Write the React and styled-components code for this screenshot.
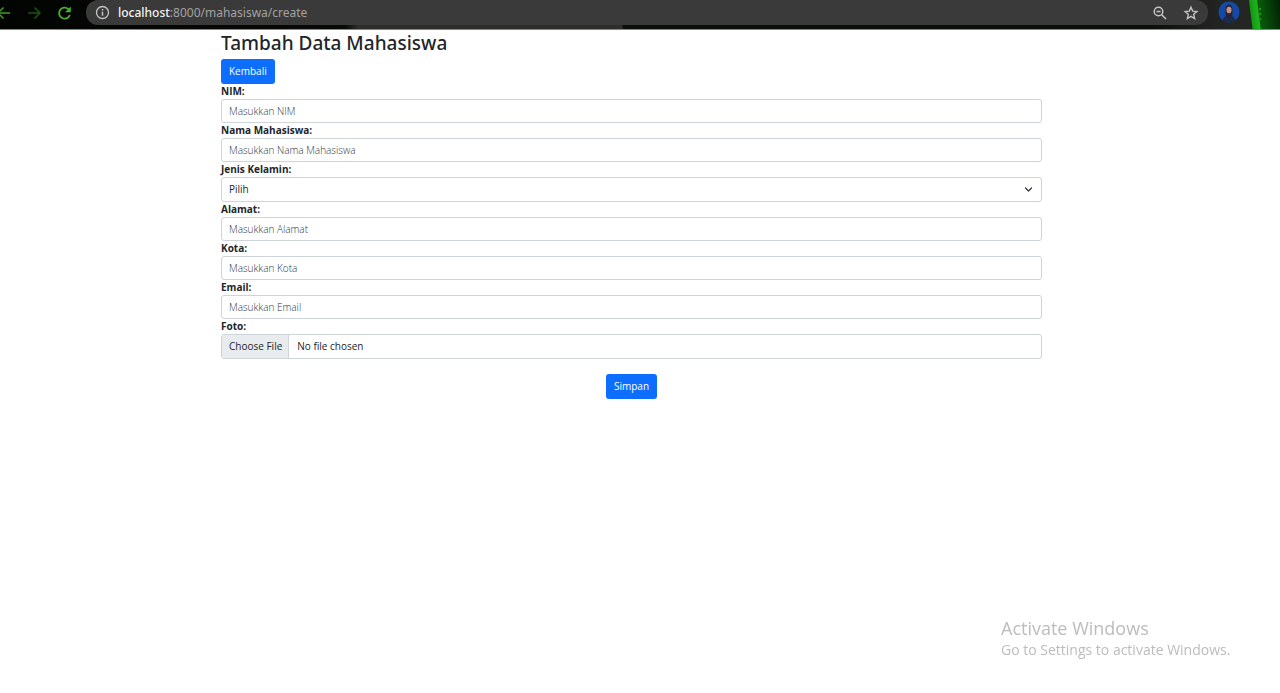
import React from "react";
import styled, { createGlobalStyle } from "styled-components";

const GlobalStyle = createGlobalStyle`
  *, *::before, *::after { box-sizing: border-box; }
  body {
    margin: 0;
    background: #fff;
    color: #212529;
    font-family: "Segoe UI", "Open Sans", "Noto Sans", sans-serif;
    font-size: 11px;
    line-height: 15px;
  }
`;

const BrowserBar = styled.header`
  display: flex;
  align-items: flex-start;
  height: 30px;
  overflow: hidden;
  border-bottom: 1px solid #85887f;
  background:
    linear-gradient(83deg, transparent 0 6px, #129b12 7px, #1fb51f 14px, #0a5a0c 15px, #074a09 22px, #053a07 28px, #021b03 40px) right / 34px 100% no-repeat,
    linear-gradient(90deg, #020402 0, #080a08 27%, #2e2f2c 28%, #2e2f2c 48.6%, #0c0e0b 48.7%, #0c0e0b 90%, #222421 95%, #262825 100%);
`;

const NavButtons = styled.nav`
  display: flex;
  flex: none;
  width: 86px;
  gap: 14px;
  margin-left: -4px;
  margin-right: 4px;
`;

const IconButton = styled.button`
  display: flex;
  flex: none;
  align-items: center;
  justify-content: center;
  width: 16px;
  height: 25px;
  padding: 0;
  border: 0;
  background: none;
  color: ${(p) => p.$color || "#c4c4c4"};
`;

const AddressBar = styled.div`
  display: flex;
  flex: 1;
  align-items: center;
  height: 25px;
  min-width: 0;
  padding: 0 9px 0 9px;
  gap: 15px;
  border-radius: 12px;
  background: #3a3a3a;
`;

const SiteInfo = styled.div`
  display: flex;
  flex: 1;
  align-items: center;
  gap: 8px;
  color: #c4c4c4;
`;

const Url = styled.span`
  color: #a2a2a2;
  font-family: "Segoe UI", "Noto Sans", sans-serif;
  font-size: 12px;
  line-height: 16px;
  white-space: nowrap;
`;

const Host = styled.span`
  color: #f2f2f2;
  font-weight: 500;
`;

const Profile = styled.div`
  display: flex;
  flex: none;
  width: 72px;
  padding: 1px 12px 0 10px;
  justify-content: space-between;
`;

const Page = styled.main`
  padding: 1px 17px 0 0;
`;

const Container = styled.div`
  max-width: 821px;
  margin: 0 auto;
`;

const Title = styled.h1`
  margin: 0 0 4px;
  font-family: "Segoe UI", "Noto Sans", sans-serif;
  font-size: 19px;
  font-weight: 500;
  line-height: 24px;
`;

const Button = styled.button`
  display: inline-block;
  height: 25px;
  padding: 0 8px;
  border: 0;
  border-radius: 3px;
  background: #0d6efd;
  color: #fff;
  font-family: inherit;
  font-size: 10px;
  line-height: 25px;
  text-decoration: none;
`;

const Field = styled.div`
  display: flex;
  flex-direction: column;
`;

const Label = styled.label`
  font-size: 10px;
  font-weight: 700;
  line-height: 15px;
`;

const controlStyle = `
  display: block;
  width: 100%;
  border: 1px solid #ced4da;
  border-radius: 3px;
  background: #fff;
  color: #212529;
  font-family: inherit;
  font-size: 10px;
  outline: none;
`;

const TextInput = styled.input`
  ${controlStyle}
  height: 24px;
  padding: 0 7px;
  &::placeholder { color: #30383f; font-weight: 300; opacity: 1; }
`;

const SelectWrap = styled.div`
  display: grid;
  align-items: center;
  > * { grid-area: 1 / 1; }
  > svg { justify-self: end; margin-right: 9px; pointer-events: none; }
`;

const Select = styled.select`
  ${controlStyle}
  height: 25px;
  padding: 0 24px 1px 7px;
  appearance: none;
`;

const FileInput = styled.input`
  ${controlStyle}
  height: 25px;
  line-height: 23px;
  &::file-selector-button {
    height: 23px;
    margin: 0 8px 0 0;
    padding: 0 6px 0 7px;
    border: 0;
    border-right: 1px solid #ced4da;
    background: #e9ecef;
    color: #212529;
    font: inherit;
  }
`;

const Actions = styled.div`
  display: flex;
  justify-content: center;
  margin-top: 15px;
`;

const Watermark = styled.aside`
  position: fixed;
  right: 54px;
  bottom: 33px;
  width: 225px;
  color: #bcbcbc;
  font-size: 14px;
  line-height: 20px;
  white-space: nowrap;
  pointer-events: none;
`;

const WatermarkTitle = styled.div`
  font-size: 18px;
  line-height: 24px;
`;

const stroke = { fill: "none", stroke: "currentColor", strokeWidth: 1.5 };

const ArrowIcon = ({ flip }) => (
  <svg width="16" height="16" viewBox="0 0 16 16" {...stroke}>
    <path d={flip ? "M2 8h12M8.5 2.5 14 8l-5.500 5.500" : "M14 8H2M7.500 2.500 2 8l5.500 5.500"} />
  </svg>
);

const ReloadIcon = () => (
  <svg width="16" height="16" viewBox="0 0 16 16" {...stroke} strokeWidth="1.8">
    <path d="M13.800 10A5.500 5.500 0 1 1 12.400 4.200L13 5" />
    <path d="M14.800 1.500v5.700H9z" fill="currentColor" stroke="none" />
  </svg>
);

const InfoIcon = () => (
  <svg width="15" height="15" viewBox="0 0 15 15" {...stroke} strokeWidth="1.300">
    <circle cx="7.500" cy="7.500" r="6" />
    <path d="M7.500 6.700v4.100M7.500 4v1.400" strokeWidth="1.500" />
  </svg>
);

const ZoomOutIcon = () => (
  <svg width="16" height="16" viewBox="0 0 16 16" {...stroke}>
    <circle cx="6.500" cy="6.500" r="4.300" />
    <path d="m9.700 9.700 4.300 4.300M4.500 6.500h4" />
  </svg>
);

const StarIcon = () => (
  <svg width="16" height="16" viewBox="0 0 16 16" {...stroke} strokeWidth="1.400">
    <path d="m8 2.200 1.700 3.900 4.200.4-3.200 2.800.9 4.200L8 11.300l-3.600 2.200.9-4.200-3.200-2.800 4.200-.4z" />
  </svg>
);

const Avatar = () => (
  <svg width="22" height="22" viewBox="0 0 22 22" role="img" aria-label="Profile">
    <defs>
      <clipPath id="avatar-circle"><circle cx="11" cy="11" r="10.500" /></clipPath>
    </defs>
    <g clipPath="url(#avatar-circle)">
      <rect width="22" height="22" fill="#1549a8" />
      <path d="M4 22c0-5 3-7.500 7-7.500s7 2.500 7 7.500z" fill="#1c2b4d" />
      <path d="M7.500 14.500c.3-2-.2-4 0-6.500C7.700 5 9 3.500 11 3.500S14.300 5 14.500 8c.2 2.500-.3 4.500 0 6.500L11 17z" fill="#2b2430" />
      <ellipse cx="11" cy="9" rx="2.500" ry="3.300" fill="#c39586" />
    </g>
  </svg>
);

const MenuIcon = () => (
  <svg width="4" height="14" viewBox="0 0 4 14" fill="currentColor">
    <circle cx="2" cy="2" r="1.300" />
    <circle cx="2" cy="7" r="1.300" />
    <circle cx="2" cy="12" r="1.300" />
  </svg>
);

const ChevronIcon = () => (
  <svg width="9" height="9" viewBox="0 0 9 9" {...stroke} stroke="#343a40" strokeWidth="1.300">
    <path d="m1.500 3 3 3 3-3" strokeLinecap="round" strokeLinejoin="round" />
  </svg>
);

function TextField({ id, label, placeholder, type = "text" }) {
  return (
    <Field>
      <Label htmlFor={id}>{label}</Label>
      <TextInput id={id} name={id} type={type} placeholder={placeholder} />
    </Field>
  );
}

export default function App() {
  return (
    <>
      <GlobalStyle />
      <BrowserBar>
        <NavButtons aria-label="Browser">
          <IconButton type="button" aria-label="Back" $color="#3f9f22"><ArrowIcon /></IconButton>
          <IconButton type="button" aria-label="Forward" $color="#1f5215"><ArrowIcon flip /></IconButton>
          <IconButton type="button" aria-label="Reload" $color="#48b02a"><ReloadIcon /></IconButton>
        </NavButtons>
        <AddressBar>
          <SiteInfo>
            <InfoIcon />
            <Url><Host>localhost</Host>:8000/mahasiswa/create</Url>
          </SiteInfo>
          <IconButton type="button" aria-label="Zoom"><ZoomOutIcon /></IconButton>
          <IconButton type="button" aria-label="Bookmark"><StarIcon /></IconButton>
        </AddressBar>
        <Profile>
          <Avatar />
          <IconButton type="button" aria-label="Menu" $color="#2a8a22"><MenuIcon /></IconButton>
        </Profile>
      </BrowserBar>
      <Page>
        <Container>
          <Title>Tambah Data Mahasiswa</Title>
          <Button as="a" href="/mahasiswa">Kembali</Button>
          <form onSubmit={(e) => e.preventDefault()}>
            <TextField id="nim" label="NIM:" placeholder="Masukkan NIM" />
            <TextField id="nama" label="Nama Mahasiswa:" placeholder="Masukkan Nama Mahasiswa" />
            <Field>
              <Label htmlFor="jenis_kelamin">Jenis Kelamin:</Label>
              <SelectWrap>
                <Select id="jenis_kelamin" name="jenis_kelamin">
                  <option>Pilih</option>
                </Select>
                <ChevronIcon />
              </SelectWrap>
            </Field>
            <TextField id="alamat" label="Alamat:" placeholder="Masukkan Alamat" />
            <TextField id="kota" label="Kota:" placeholder="Masukkan Kota" />
            <TextField id="email" label="Email:" placeholder="Masukkan Email" type="email" />
            <Field>
              <Label htmlFor="foto">Foto:</Label>
              <FileInput id="foto" name="foto" type="file" />
            </Field>
            <Actions>
              <Button type="submit">Simpan</Button>
            </Actions>
          </form>
        </Container>
      </Page>
      <Watermark>
        <WatermarkTitle>Activate Windows</WatermarkTitle>
        Go to Settings to activate Windows.
      </Watermark>
    </>
  );
}
